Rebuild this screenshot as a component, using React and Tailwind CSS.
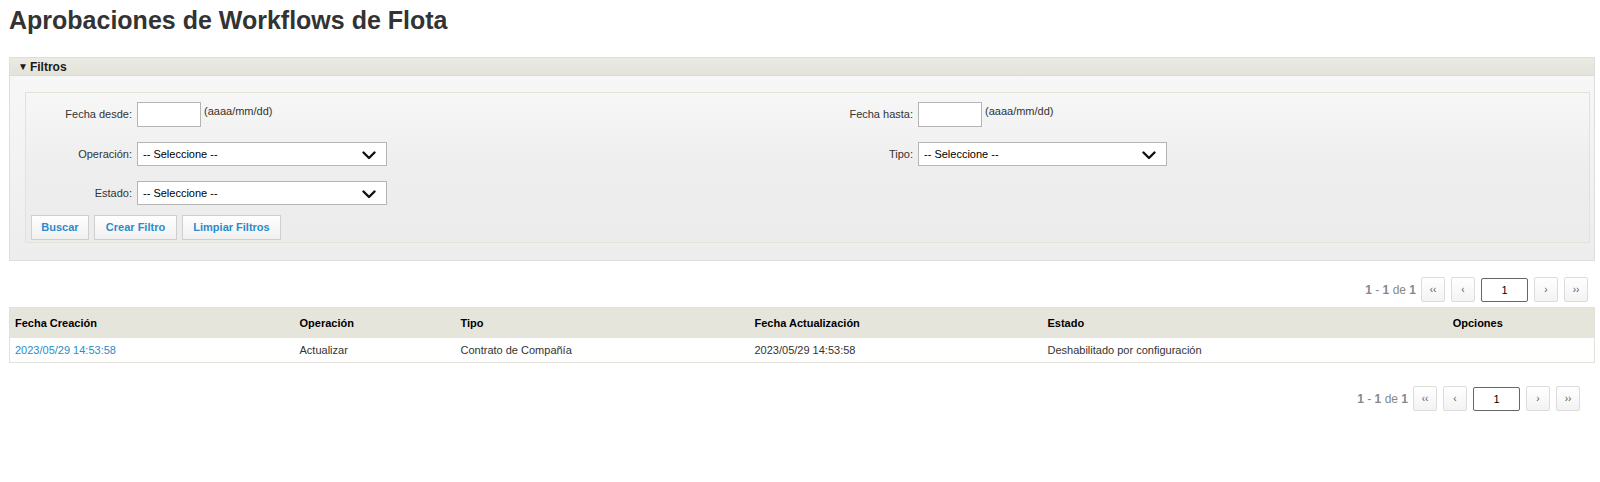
import React from "react";

function Chevron() {
    return (
        <svg width="14" height="9" viewBox="0 0 14 9" className="absolute right-[10px] top-[8px]">
            <path d="M1.5 1.5 L7 7 L12.5 1.5" fill="none" stroke="#111" strokeWidth="2.4" strokeLinecap="round" strokeLinejoin="round" />
        </svg>
    );
}

function FakeSelect({ width }) {
    return (
        <div className={`relative h-[24px] ${width} border border-[#b5b5b5] bg-white text-[11px] text-black leading-[22px] pl-[5px]`}>
            -- Seleccione --
            <Chevron />
        </div>
    );
}

function Label({ children }) {
    return <div className="text-right pr-[5px] text-[11px] text-[#333]">{children}</div>;
}

function DateField() {
    return (
        <div className="flex items-center gap-[3px]">
            <div className="w-[64px] h-[25px] border border-[#b5b5b5] bg-white" />
            <span className="text-[11px] text-[#333] -mt-[7px]">(aaaa/mm/dd)</span>
        </div>
    );
}

function Btn({ children, w }) {
    return (
        <button className={`${w} h-[25px] border border-[#cfcfcf] bg-gradient-to-b from-white to-[#f0f0f0] text-[11px] font-bold text-[#2a8ccb]`}>
            {children}
        </button>
    );
}

function PagerBtn({ children }) {
    return (
        <div className="w-[24px] h-[25px] border border-[#dcdcdc] rounded-[2px] bg-gradient-to-b from-white to-[#f3f3f3] flex items-center justify-center text-[10px] text-[#555]">
            {children}
        </div>
    );
}

function Pager({ className }) {
    return (
        <div className={`flex items-center justify-end gap-[6px] ${className}`}>
            <span className="text-[12px] text-[#888] mr-[-1px]">
                <b>1</b> - <b>1</b> de <b>1</b>
            </span>
            <PagerBtn>‹‹</PagerBtn>
            <PagerBtn>‹</PagerBtn>
            <div className="w-[47px] h-[24px] border border-[#666] rounded-[2px] bg-white text-[11px] text-black text-center leading-[22px]">1</div>
            <PagerBtn>›</PagerBtn>
            <PagerBtn>››</PagerBtn>
        </div>
    );
}

const columns = [
    { title: "Fecha Creación", w: "w-[285px]" },
    { title: "Operación", w: "w-[161px]" },
    { title: "Tipo", w: "w-[294px]" },
    { title: "Fecha Actualización", w: "w-[293px]" },
    { title: "Estado", w: "w-[319px]" },
    { title: "Opciones", w: "", center: true },
];

export default function App() {
    return (
        <div className="font-['Liberation_Sans',Arial,sans-serif] bg-white min-h-[482px] pl-[9px] pr-[5px] pt-[5px]">
            <h1 className="text-[25px] leading-[30px] font-bold text-[#333]">Aprobaciones de Workflows de Flota</h1>

            {/* Filtros */}
            <div className="mt-[22px] border border-[#dedede]">
                <div className="h-[18px] bg-gradient-to-b from-[#ebeae3] to-[#e4e3da] border-b border-[#dcdcd2] flex items-center pl-[8px] text-[12px] font-bold text-[#1a1a1a]">
                    <span className="text-[10px] mr-[2px]">▼</span>Filtros
                </div>
                <div className="bg-gradient-to-b from-[#f7f7f7] to-[#ededed] pt-[16px] pb-[17px] pl-[15px] pr-[4px]">
                    <div className="border border-[#e2e2d7] bg-gradient-to-b from-[#f7f7f7] via-[#eeeeee] to-[#ececec] pt-[9px] pb-[2px]">
                        <div className="grid grid-cols-[111px_1fr_110px_1fr] items-center gap-y-[15px]">
                            <Label>Fecha desde:</Label>
                            <DateField />
                            <Label>Fecha hasta:</Label>
                            <DateField />

                            <Label>Operación:</Label>
                            <FakeSelect width="w-[250px]" />
                            <Label>Tipo:</Label>
                            <FakeSelect width="w-[249px]" />

                            <Label>Estado:</Label>
                            <FakeSelect width="w-[250px]" />
                            <div />
                            <div />
                        </div>
                        <div className="flex gap-[5px] pl-[5px] mt-[10px]">
                            <Btn w="w-[58px]">Buscar</Btn>
                            <Btn w="w-[83px]">Crear Filtro</Btn>
                            <Btn w="w-[99px]">Limpiar Filtros</Btn>
                        </div>
                    </div>
                </div>
            </div>

            <Pager className="mt-[16px] pr-[7px]" />

            {/* Tabla */}
            <table className="mt-[5px] w-full border border-[#e2e2da] border-collapse text-[11px]">
                <thead>
                    <tr className="h-[30px] bg-[#e6e5dc]">
                        {columns.map((c, i) => (
                            <th key={i} className={`${c.w} font-bold text-black px-[5px] ${c.center ? "text-center" : "text-left"}`}>
                                {c.title}
                            </th>
                        ))}
                    </tr>
                </thead>
                <tbody>
                    <tr className="h-[25px] bg-white border-b border-[#e2e2da]">
                        <td className="px-[5px] text-[#2a8ccb]">2023/05/29 14:53:58</td>
                        <td className="px-[5px] text-[#333]">Actualizar</td>
                        <td className="px-[5px] text-[#333]">Contrato de Compañía</td>
                        <td className="px-[5px] text-[#333]">2023/05/29 14:53:58</td>
                        <td className="px-[5px] text-[#333]">Deshabilitado por configuración</td>
                        <td className="px-[5px]"></td>
                    </tr>
                </tbody>
            </table>

            <Pager className="mt-[23px] pr-[15px]" />
        </div>
    );
}
